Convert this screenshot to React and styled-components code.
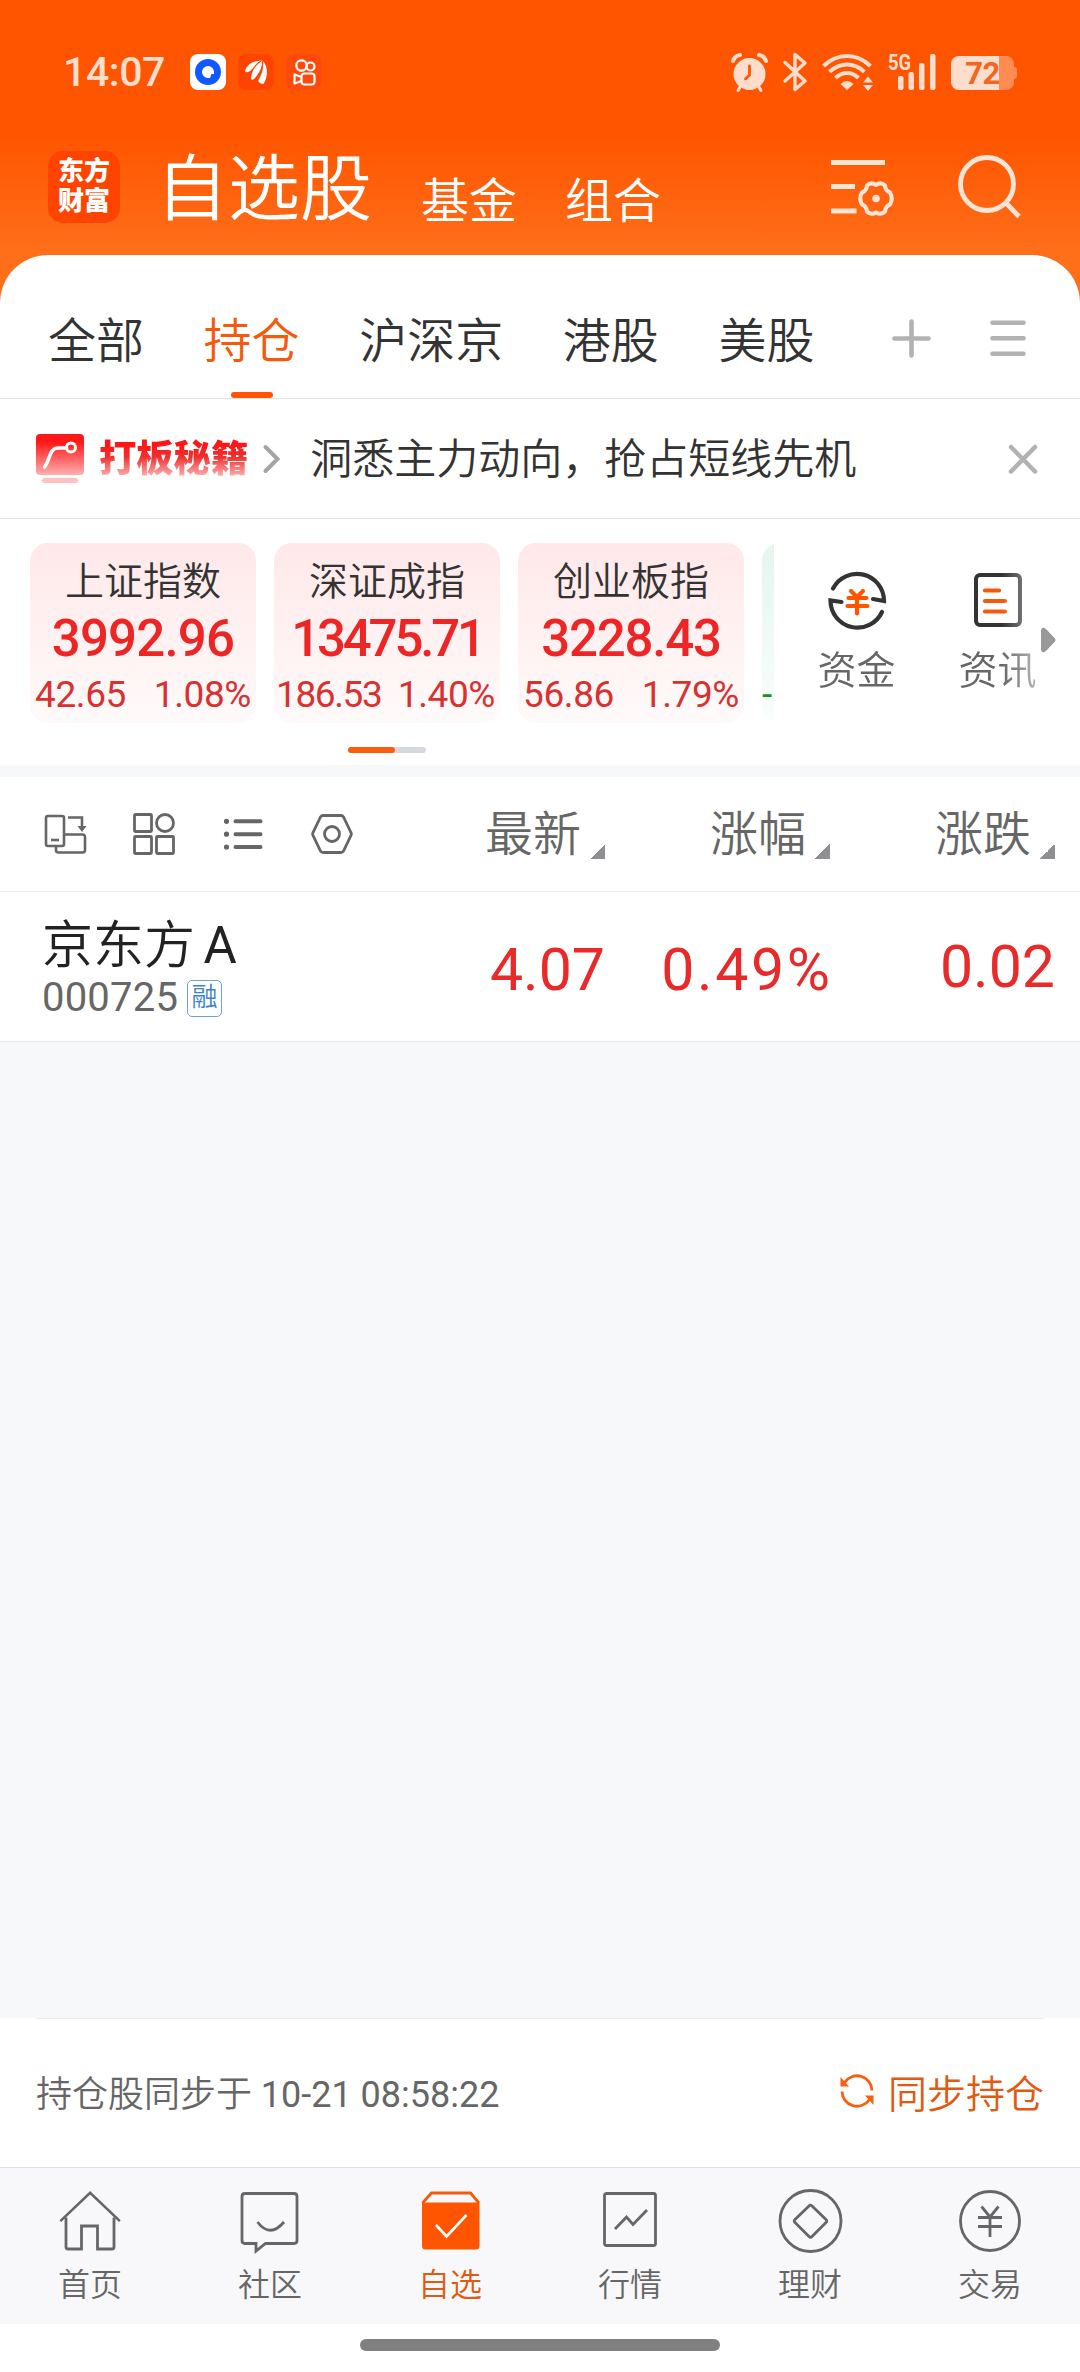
import styled, { createGlobalStyle } from 'styled-components'

const GlobalStyle = createGlobalStyle`
  * {
    box-sizing: border-box;
  }

  body {
    margin: 0;
    background-color: #f7f8fa;
    font-family: Roboto, 'Noto Sans CJK SC', sans-serif;
    font-weight: 350;
    color: #333333;
  }

  svg {
    display: block;
    flex: none;
    overflow: visible;
  }
`

const Page = styled.div`
  width: 1080px;
  height: 2372px;
  display: flex;
  flex-direction: column;
  overflow: hidden;
  white-space: nowrap;
`

const Hero = styled.header`
  height: 303px;
  flex: none;
  background: linear-gradient(#ff5500 0, #ff5500 135px, #ff6f1a 255px, #ff6f1a 100%);
`

const StatusBar = styled.div`
  height: 144px;
  padding: 0 64px 0 63px;
  display: flex;
  align-items: center;
  justify-content: space-between;
`

const StatusGroup = styled.div`
  display: flex;
  align-items: center;
  gap: ${props => props.$gap}px;
`

const Clock = styled.span`
  width: 115px;
  font-family: Roboto, sans-serif;
  font-size: 41px;
  font-weight: 500;
  letter-spacing: -0.4px;
  line-height: 36px;
  color: #ffddcc;
`

const Battery = styled.div`
  position: relative;
  width: 63px;
  height: 34px;
  margin: 2px 2px 0 0;
  border-radius: 8px;
  background: linear-gradient(90deg, #ffddcc 48px, #ff8c52 48px);
  font-size: 31px;
  font-weight: 700;
  line-height: 35px;
  letter-spacing: -0.5px;
  color: #f0671f;
  text-align: center;

  &::after {
    content: '';
    position: absolute;
    right: -3px;
    top: 11px;
    width: 3px;
    height: 12px;
    border-radius: 0 3px 3px 0;
    background-color: #ff8c52;
  }
`

const TitleBar = styled.div`
  height: 111px;
  padding: 0 59px 0 48px;
  display: flex;
  align-items: flex-start;
`

const Logo = styled.div`
  width: 72px;
  height: 72px;
  margin-top: 7px;
  padding-top: 5px;
  border-radius: 15px;
  background-color: #ff4400;
  color: white;
  font-size: 26px;
  font-weight: 900;
  line-height: 30px;
  text-align: center;
`

const TitleTabs = styled.nav`
  height: 89px;
  flex: 1;
  margin-left: 36px;
  display: flex;
  align-items: flex-end;
  gap: 48px;
  color: white;
`

const TitleTab = styled.span`
  font-size: ${props => (props.$active ? 72 : 48)}px;
  line-height: ${props => (props.$active ? 86 : 62)}px;
  margin-right: ${props => (props.$active ? 1 : 0)}px;
`

const HeroActions = styled.div`
  margin-top: 10px;
  display: flex;
  gap: 62px;
`

const Sheet = styled.main`
  margin-top: -48px;
  flex: 1;
  display: flex;
  flex-direction: column;
`

const TabBar = styled.nav`
  height: 144px;
  padding: 0 54px 0 48px;
  border-bottom: 1px solid #e4e4e4;
  border-radius: 48px 48px 0 0;
  background-color: white;
  display: flex;
  gap: 59.6px;
`

const Tab = styled.span`
  position: relative;
  height: 143px;
  font-size: 48px;
  line-height: 174px;
  color: ${props => (props.$active ? '#f55a0c' : '#333333')};

  &::after {
    content: '';
    display: ${props => (props.$active ? 'block' : 'none')};
    position: absolute;
    left: 50%;
    bottom: 0;
    width: 42px;
    height: 6px;
    margin-left: -21px;
    border-radius: 3px;
    background-color: #ff5500;
  }
`

const TabActions = styled.div`
  margin: 63px 0 0 auto;
  display: flex;
  gap: 59px;
`

const Banner = styled.section`
  height: 120px;
  padding: 0 42px 0 36px;
  border-bottom: 1px solid #e4e4e4;
  background-color: white;
  display: flex;
  align-items: center;
`

const BannerName = styled.strong`
  margin: 0 15px 0 15px;
  font-size: 37.3px;
  font-weight: 900;
  line-height: 48px;
  background: linear-gradient(#ff1515 10px, #ee3030 22px, #ffb4b4 42px);
  background-clip: text;
  -webkit-background-clip: text;
  color: transparent;
`

const BannerText = styled.span`
  flex: 1;
  margin-left: 29px;
  padding-top: 2px;
  font-size: 42px;
  line-height: 60px;
`

const Overview = styled.section`
  height: 246px;
  background-color: white;
  display: flex;
`

const IndexArea = styled.div`
  width: 774px;
  padding: 24px 0 0 30px;
  overflow: hidden;
`

const IndexList = styled.div`
  display: flex;
  gap: 18px;
`

const IndexCard = styled.div`
  width: 226px;
  height: 180px;
  flex: none;
  border-radius: 18px;
  background: ${props =>
    props.$down ? 'linear-gradient(#e4f6ed, #fafefc)' : 'linear-gradient(#ffe8e9, #fffafa)'};
  color: ${props => (props.$down ? '#1f8f2a' : '#d93030')};
  text-align: center;
`

const IndexName = styled.div`
  padding-top: 12px;
  font-size: 39px;
  line-height: 54px;
  color: #333333;
`

const IndexValue = styled.div`
  font-size: 51px;
  font-weight: 500;
  line-height: 60px;
  letter-spacing: ${props => props.$spacing}px;
  color: #ee2525;
`

const IndexChange = styled.div`
  display: flex;
  justify-content: ${props => (props.$down ? 'flex-start' : 'space-between')};
  padding: 0 ${props => (props.$down ? 0 : 5)}px;
  font-size: 37px;
  font-weight: 400;
  line-height: 51px;
  letter-spacing: -0.4px;
`

const Change = styled.span`
  margin-left: ${props => (props.$tight ? -3 : 0)}px;
  letter-spacing: ${props => (props.$tight ? -1.4 : -0.4)}px;
`

const ScrollTrack = styled.div`
  width: 78px;
  height: 6px;
  margin: 24px 0 0 318px;
  border-radius: 3px;
  background-color: #d5d9dd;
`

const ScrollThumb = styled.div`
  width: 47px;
  height: 6px;
  border-radius: 3px;
  background-color: #fb5d0c;
`

const Shortcuts = styled.div`
  width: 267px;
  padding-left: 12px;
  display: flex;
  overflow: hidden;
  mask-image: linear-gradient(90deg, black 228px, rgba(0, 0, 0, 0.45) 264px);
`

const Shortcut = styled.div`
  width: 141px;
  padding-top: 51px;
  flex: none;
  display: flex;
  flex-direction: column;
  align-items: center;
  font-size: 39px;
  line-height: 54px;
  color: #666666;

  svg {
    margin-bottom: 14px;
  }
`

const ShortcutMore = styled.div`
  padding-top: 108px;
`

const Divider = styled.div`
  height: 12px;
  background-color: #f7f8fa;
`

const columns = '485px 120px 225px 225px'

const TableHead = styled.div`
  height: 115px;
  border-bottom: 1px solid #ececec;
  background-color: white;
  display: grid;
  grid-template-columns: ${columns};
`

const Tools = styled.div`
  padding: 35px 0 0 43px;
  display: flex;
  gap: 45px;
`

const SortLabel = styled.div`
  display: flex;
  justify-content: flex-end;
  gap: 9px;
  font-size: 48px;
  line-height: 115px;
  color: #666666;

  &::after {
    content: '';
    width: 15px;
    height: 15px;
    margin-top: 67px;
    background: linear-gradient(135deg, transparent 50%, #8e8e93 50%);
  }
`

const StockRow = styled.div`
  height: 150px;
  border-bottom: 1px solid #e8e8e8;
  background-color: white;
  display: grid;
  grid-template-columns: ${columns};
`

const Stock = styled.div`
  padding: 24px 0 0 42px;
`

const StockName = styled.div`
  font-size: 51px;
  line-height: 60px;
  word-spacing: -4px;
  color: #222222;
`

const Latin = styled.span`
  font-weight: 400;
`

const StockCode = styled.div`
  margin-top: 2px;
  display: flex;
  align-items: center;
  gap: 9px;
  font-size: 40px;
  font-weight: 400;
  line-height: 40px;
  letter-spacing: 0.2px;
  color: #666666;
`

const Tag = styled.span`
  width: 35px;
  height: 37px;
  border: 1.5px solid #6aa3da;
  border-radius: 5px;
  font-size: 26px;
  font-weight: 350;
  line-height: 33px;
  letter-spacing: 0;
  text-align: center;
  color: #3b82cc;
`

const Figure = styled.div`
  padding-top: ${props => props.$top}px;
  margin-right: ${props => -(props.$spacing || 0)}px;
  font-size: 59px;
  font-weight: 400;
  line-height: 70px;
  letter-spacing: ${props => props.$spacing || 0}px;
  text-align: right;
  color: #e92a2a;
`

const Empty = styled.div`
  flex: 1;
  background-color: #f7f8fa;
`

const SyncBar = styled.section`
  height: 149px;
  padding: 0 36px;
  background-color: white;
`

const SyncInner = styled.div`
  height: 149px;
  padding-bottom: 4px;
  border-top: 1px solid #ebebeb;
  display: flex;
  align-items: center;
  justify-content: space-between;
  font-size: 36px;
  color: #666666;
`

const SyncButton = styled.span`
  display: flex;
  align-items: center;
  gap: 14px;
  font-size: 39px;
  color: #e05a12;
`

const BottomNav = styled.nav`
  height: 157px;
  border-top: 1px solid #e0e0e2;
  background-color: #f8f8fa;
  display: flex;
`

const NavItem = styled.div`
  width: 180px;
  padding-top: 20px;
  display: flex;
  flex-direction: column;
  align-items: center;
  font-size: 32px;
  line-height: 46px;
  color: ${props => (props.$active ? '#e05a12' : '#666666')};

  svg {
    margin-bottom: 7px;
  }
`

const HomeArea = styled.div`
  height: 48px;
  padding-top: 15px;
  background-color: white;
`

const HomeBar = styled.div`
  width: 360px;
  height: 12px;
  margin: 0 auto;
  border-radius: 6px;
  background-color: #808080;
`

const indexes = [
  { name: '上证指数', value: '3992.96', change: '42.65', percent: '1.08%', spacing: -0.8 },
  { name: '深证成指', value: '13475.71', change: '186.53', percent: '1.40%', spacing: -3.2 },
  { name: '创业板指', value: '3228.43', change: '56.86', percent: '1.79%', spacing: -1.2 },
]

const BrowserAppIcon = () => (
  <svg width="36" height="36" viewBox="0 0 36 36">
    <rect width="36" height="36" rx="8" fill="white" />
    <circle cx="18" cy="18" r="13" fill="#1257ff" />
    <path d="M18 12a6 6 0 0 1 6 6v2h-2.500l-1.500 4h-2a6 6 0 0 1 0-12z" fill="white" />
  </svg>
)

const FinanceAppIcon = () => (
  <svg width="36" height="36" viewBox="0 0 36 36">
    <rect width="36" height="36" rx="8" fill="#ff4400" />
    <g fill="white">
      <path d="M7 17C9 10 15 7 23 6.500C19 10 16 14 12 17Q8 19.500 7 17z" />
      <path d="M13 24C14.500 15 18 9 24 6.500C25 12 21 20 16 25Q13 27 13 24z" />
      <path d="M20 27C24 20 26 14 24.500 6.500C30 12 30.500 22 25.500 30Q22 30 20 27z" />
    </g>
    <path d="M12.500 20C15 14 19 9.500 23 7M18.500 26C23 19 25.500 13 24.500 7" stroke="#ff4400" strokeWidth="1.200" fill="none" />
  </svg>
)

const VideoAppIcon = () => (
  <svg width="36" height="36" viewBox="0 0 36 36" fill="none" stroke="white" strokeWidth="2.200">
    <rect width="36" height="36" rx="8" fill="#ff4a0c" stroke="none" />
    <circle cx="15.500" cy="11.500" r="5.200" />
    <circle cx="24.500" cy="12.500" r="4" />
    <rect x="15.500" y="19.500" width="13" height="11" rx="3" />
    <path d="M15.500 23l-7-2.500v9l7-2.500" strokeLinejoin="round" />
  </svg>
)

const AlarmIcon = () => (
  <svg width="37" height="39" viewBox="0 0 37 39">
    <g stroke="#ffddcc" fill="none" strokeLinecap="round">
      <path d="M2 8Q3.500 3 9 2M35 8Q33.500 3 28 2" strokeWidth="4" />
      <path d="M9 34l-2 3.500M28 34l2 3.500" strokeWidth="3" />
    </g>
    <circle cx="18.500" cy="21" r="16" fill="#ffddcc" />
    <path d="M18.500 13v9l-4 4" stroke="#ff5500" strokeWidth="2.800" fill="none" strokeLinecap="round" />
  </svg>
)

const BluetoothIcon = () => (
  <svg width="24" height="40" viewBox="0 0 24 40" fill="none" stroke="#ffddcc" strokeWidth="3.400" strokeLinejoin="round" strokeLinecap="round">
    <path d="M2 10.500l20 18.500-10 8.500v-35L22 11 2 29" />
  </svg>
)

const WifiIcon = () => (
  <svg width="51" height="38" viewBox="0 0 51 38" fill="none" stroke="#ffddcc" strokeWidth="4">
    <path d="M1.500 13Q12 3 25 3t23.500 10" />
    <path d="M7.500 18.800Q15.500 11.500 25 11.500t17.500 7.300" />
    <path d="M13.500 25Q18.500 20 25 20t11.500 5" />
    <path d="M18.500 31Q25 25 31.500 31L25 37z" fill="#ffddcc" stroke="none" />
    <path d="M41 29.500l5-6 5 6zM41 32h10l-5 6z" fill="#ffddcc" stroke="none" />
  </svg>
)

const SignalIcon = () => (
  <svg width="48" height="38" viewBox="0 0 48 38" fill="#ffddcc">
    <text x="0" y="17" fontSize="22" fontWeight="700" fontFamily="Roboto, sans-serif" textLength="23" lengthAdjust="spacingAndGlyphs">5G</text>
    <rect x="10" y="23" width="5.500" height="14" rx="2" />
    <rect x="20.500" y="19" width="5.500" height="18" rx="2" />
    <rect x="31" y="10" width="5.500" height="27" rx="2" />
    <rect x="42" y="1" width="5.500" height="36" rx="2" />
  </svg>
)

const MenuSettingsIcon = () => (
  <svg width="64" height="60" viewBox="0 0 64 60" fill="none" stroke="#ffe4d6" strokeWidth="5">
    <path d="M0 8.500h54M0 32.500h24M0 57h25.500" />
    <path
      d="M45 31Q50 27.500 54 31.500Q54.500 37 59 38.500Q62.500 44.500 59 50.500Q54.500 52 54 57.500Q50 61.500 45 58.500Q40 61.500 36 57.500Q35.500 52 31 50.500Q27.500 44.500 31 38.500Q35.500 37 36 31.500Q40 27.500 45 31z"
      strokeWidth="4"
      strokeLinejoin="round"
    />
    <circle cx="45" cy="44.500" r="3.800" fill="#ffe4d6" stroke="none" />
  </svg>
)

const SearchIcon = () => (
  <svg width="64" height="64" viewBox="0 0 64 64" fill="none" stroke="#ffe4d6" strokeWidth="4.800">
    <circle cx="30" cy="30" r="26.500" />
    <path d="M48.500 48.500l13.500 14" />
  </svg>
)

const PlusIcon = () => (
  <svg width="39" height="40" viewBox="0 0 39 40" stroke="#b2b2b2" strokeWidth="4.600" strokeLinecap="round">
    <path d="M2.500 20.500h34M19.500 3.500v34" />
  </svg>
)

const ListIcon = () => (
  <svg width="36" height="40" viewBox="0 0 36 40" stroke="#b2b2b2" strokeWidth="4.600" strokeLinecap="round">
    <path d="M2.500 4.700h31M2.500 20.300h31M2.500 35.700h31" />
  </svg>
)

const BannerIcon = () => (
  <svg width="48" height="50" viewBox="0 0 48 50">
    <defs>
      <linearGradient id="badge" x1="0" y1="0" x2="0" y2="1">
        <stop offset=".2" stopColor="#ff1818" />
        <stop offset="1" stopColor="#ffb0b0" />
      </linearGradient>
    </defs>
    <rect y="0" width="48" height="41" rx="4" fill="url(#badge)" />
    <path d="M8.500 33C14 27 13 14 22 14h8.500" stroke="white" strokeWidth="3.600" fill="none" strokeLinecap="round" />
    <circle cx="35" cy="13.500" r="4.500" stroke="white" strokeWidth="3" fill="none" />
    <rect x="6" y="44" width="36" height="5" rx="2.500" fill="#ffc0c0" />
  </svg>
)

const ChevronIcon = () => (
  <svg width="18" height="28" viewBox="0 0 18 28" fill="none" stroke="#a5a5a5" strokeWidth="4">
    <path d="M2.500 2l12 12-12 12" strokeLinecap="round" />
  </svg>
)

const CloseIcon = () => (
  <svg width="30" height="30" viewBox="0 0 30 30" stroke="#b2b2b2" strokeWidth="4.500" strokeLinecap="round">
    <path d="M3 3l24 24.500M27 3l-24 24.500" />
  </svg>
)

const FundIcon = () => (
  <svg width="60" height="60" viewBox="0 0 60 60" fill="none" stroke="#333333" strokeWidth="4.200">
    <path d="M6 18.500A27 27 0 0 1 57 31l-11-2M55 42A27 27 0 0 1 3.500 30.500l11 1.500" strokeLinecap="round" />
    <path d="M24 21l6 6 6-6M21.500 28h18M20.500 36h20M30 27v16.500" stroke="#ff5500" strokeLinecap="round" />
  </svg>
)

const NewsIcon = () => (
  <svg width="48" height="60" viewBox="0 0 48 60" fill="none" stroke="#333333" strokeWidth="4">
    <rect x="2" y="5" width="44" height="50" rx="4" />
    <path d="M11 20.500h14M11 31h20M11 41.500h20" stroke="#f55a0c" strokeWidth="4.200" strokeLinecap="round" />
  </svg>
)

const ArrowIcon = () => (
  <svg width="15" height="26" viewBox="0 0 15 26">
    <path d="M0 3Q1-1 5 2l8.500 9q2 2 0 4L5 24q-4 3-5-1z" fill="#999999" />
  </svg>
)

const RotateIcon = () => (
  <svg width="44" height="44" viewBox="0 0 44 44" fill="none" stroke="#666666" strokeWidth="2.600">
    <rect x="3" y="4" width="18" height="30" rx="2" />
    <path d="M8 28h8" />
    <path d="M13 34v4q0 2.500 2.500 2.500h24q2.500 0 2.500-2.500V25q0-2.500-2.500-2.500H21" />
    <path d="M25 5.500h14v10" />
    <path d="M34.500 14h9l-4.500 6z" fill="#666666" stroke="none" />
  </svg>
)

const GridIcon = () => (
  <svg width="44" height="44" viewBox="0 0 44 44" fill="none" stroke="#666666" strokeWidth="2.800">
    <rect x="2.500" y="2.500" width="17" height="17" rx="1" />
    <circle cx="33" cy="11" r="8.500" />
    <rect x="2.500" y="24.500" width="17" height="17" rx="1" />
    <rect x="24.500" y="24.500" width="17" height="17" rx="1" />
  </svg>
)

const RowsIcon = () => (
  <svg width="44" height="44" viewBox="0 0 44 44" fill="none" stroke="#666666" strokeWidth="4" strokeLinecap="round">
    <path d="M14.500 9.300h25M14.500 22.200h25M14.500 35h25" />
    <path d="M5.500 9.300h.01M5.500 22.200h.01M5.500 35h.01" strokeWidth="5.200" />
  </svg>
)

const HexIcon = () => (
  <svg width="44" height="44" viewBox="0 0 44 44" fill="none" stroke="#666666" strokeWidth="2.800">
    <path d="M13 3.500h18q1.500 0 2.500 1.500L41 20.500q.8 1.500 0 3L33.500 39q-1 1.500-2.500 1.500H13q-1.500 0-2.500-1.500L3 23.500q-.8-1.500 0-3L10.500 5q1-1.500 2.500-1.500z" />
    <circle cx="22" cy="22" r="7.500" />
  </svg>
)

const SyncIcon = () => (
  <svg width="34" height="34" viewBox="0 0 34 34" fill="none" stroke="#fa5f10" strokeWidth="2.800">
    <path d="M4.500 8.500A15 15 0 0 1 32 16.500M2 17.500A15 15 0 0 0 29.500 25.500" />
    <path d="M.5 3v9.500h8.500zM33.500 31v-9.500H25z" fill="#fa5f10" stroke="none" />
  </svg>
)

const navIcons = {
  home: (
    <>
      <path d="M2 34.500L34 4l32 30.500" transform="translate(1.500 1) scale(.93)" />
      <path d="M9 29.500V59q0 2 2 2h13.500V38h16v23H55q2 0 2-2V29.500" />
    </>
  ),
  chat: (
    <path d="M8 5.500h49q3 0 3 3v44q0 3-3 3H28.500l-9.500 7.500V55.500H8q-3 0-3-3v-44q0-3 3-3zM20.500 34q12.500 16.500 26.500 0" />
  ),
  chosen: (
    <>
      <path d="M5.500 15L14.500 5h39l8.500 10" stroke="#f55a0c" />
      <path d="M5 14.500h57.500V58q0 3.500-3.500 3.500H8.500Q5 61.500 5 58z" fill="#ff5500" stroke="none" />
      <path d="M19 37L29.500 48.500l20-21.500" stroke="white" strokeWidth="2.600" />
    </>
  ),
  market: (
    <>
      <rect x="7.500" y="5.500" width="51" height="52" rx="2" />
      <path d="M18 41l11.500-12 6.500 7.500L50 22" />
    </>
  ),
  wealth: (
    <>
      <circle cx="33.500" cy="33" r="30.500" />
      <path d="M32 18q1.500-1.500 3 0l14 13.500q1.500 1.500 0 3L35 48.500q-1.500 1.500-3 0L18 34.500q-1.500-1.500 0-3z" />
    </>
  ),
  trade: (
    <>
      <circle cx="33" cy="33" r="29.500" />
      <path d="M24.500 18.500L33 29l8.500-10.500M21 29.500h24M21 38.500h24M33 29v20" />
    </>
  ),
}

const navItems = [
  { icon: 'home', label: '首页' },
  { icon: 'chat', label: '社区' },
  { icon: 'chosen', label: '自选', active: true },
  { icon: 'market', label: '行情' },
  { icon: 'wealth', label: '理财' },
  { icon: 'trade', label: '交易' },
]

const App = () => {
  return (
    <>
      <GlobalStyle />
      <Page>
        <Hero>
          <StatusBar>
            <StatusGroup $gap={12}>
              <Clock>14:07</Clock>
              <BrowserAppIcon />
              <FinanceAppIcon />
              <VideoAppIcon />
            </StatusGroup>
            <StatusGroup $gap={15}>
              <AlarmIcon />
              <BluetoothIcon />
              <WifiIcon />
              <SignalIcon />
              <Battery>72</Battery>
            </StatusGroup>
          </StatusBar>

          <TitleBar>
            <Logo>
              东方<br />
              财富
            </Logo>
            <TitleTabs>
              <TitleTab $active>自选股</TitleTab>
              <TitleTab>基金</TitleTab>
              <TitleTab>组合</TitleTab>
            </TitleTabs>
            <HeroActions>
              <MenuSettingsIcon />
              <SearchIcon />
            </HeroActions>
          </TitleBar>
        </Hero>

        <Sheet>
          <TabBar>
            <Tab>全部</Tab>
            <Tab $active>持仓</Tab>
            <Tab>沪深京</Tab>
            <Tab>港股</Tab>
            <Tab>美股</Tab>
            <TabActions>
              <PlusIcon />
              <ListIcon />
            </TabActions>
          </TabBar>

          <Banner>
            <BannerIcon />
            <BannerName>打板秘籍</BannerName>
            <ChevronIcon />
            <BannerText>洞悉主力动向，抢占短线先机</BannerText>
            <CloseIcon />
          </Banner>

          <Overview>
            <IndexArea>
              <IndexList>
                {indexes.map(item => (
                  <IndexCard key={item.name}>
                    <IndexName>{item.name}</IndexName>
                    <IndexValue $spacing={item.spacing}>{item.value}</IndexValue>
                    <IndexChange>
                      <Change $tight={item.change.length > 5}>{item.change}</Change>
                      <Change>{item.percent}</Change>
                    </IndexChange>
                  </IndexCard>
                ))}
                <IndexCard $down>
                  <IndexName>&nbsp;</IndexName>
                  <IndexValue>&nbsp;</IndexValue>
                  <IndexChange $down>-</IndexChange>
                </IndexCard>
              </IndexList>
              <ScrollTrack>
                <ScrollThumb />
              </ScrollTrack>
            </IndexArea>
            <Shortcuts>
              <Shortcut>
                <FundIcon />
                资金
              </Shortcut>
              <Shortcut>
                <NewsIcon />
                资讯
              </Shortcut>
            </Shortcuts>
            <ShortcutMore>
              <ArrowIcon />
            </ShortcutMore>
          </Overview>

          <Divider />

          <TableHead>
            <Tools>
              <RotateIcon />
              <GridIcon />
              <RowsIcon />
              <HexIcon />
            </Tools>
            <SortLabel>最新</SortLabel>
            <SortLabel>涨幅</SortLabel>
            <SortLabel>涨跌</SortLabel>
          </TableHead>

          <StockRow>
            <Stock>
              <StockName>
                京东方 <Latin>A</Latin>
              </StockName>
              <StockCode>
                000725 <Tag>融</Tag>
              </StockCode>
            </Stock>
            <Figure $top={43}>4.07</Figure>
            <Figure $top={43} $spacing={2.6}>0.49%</Figure>
            <Figure $top={40}>0.02</Figure>
          </StockRow>

          <Empty />

          <SyncBar>
            <SyncInner>
              <span>
                持仓股同步于 <Latin>10-21 08:58:22</Latin>
              </span>
              <SyncButton>
                <SyncIcon />
                同步持仓
              </SyncButton>
            </SyncInner>
          </SyncBar>

          <BottomNav>
            {navItems.map(item => (
              <NavItem key={item.icon} $active={item.active}>
                <svg width="67" height="67" viewBox="0 0 67 67" fill="none" stroke="#666666" strokeWidth="2.800">
                  {navIcons[item.icon]}
                </svg>
                {item.label}
              </NavItem>
            ))}
          </BottomNav>

          <HomeArea>
            <HomeBar />
          </HomeArea>
        </Sheet>
      </Page>
    </>
  )
}

export default App
